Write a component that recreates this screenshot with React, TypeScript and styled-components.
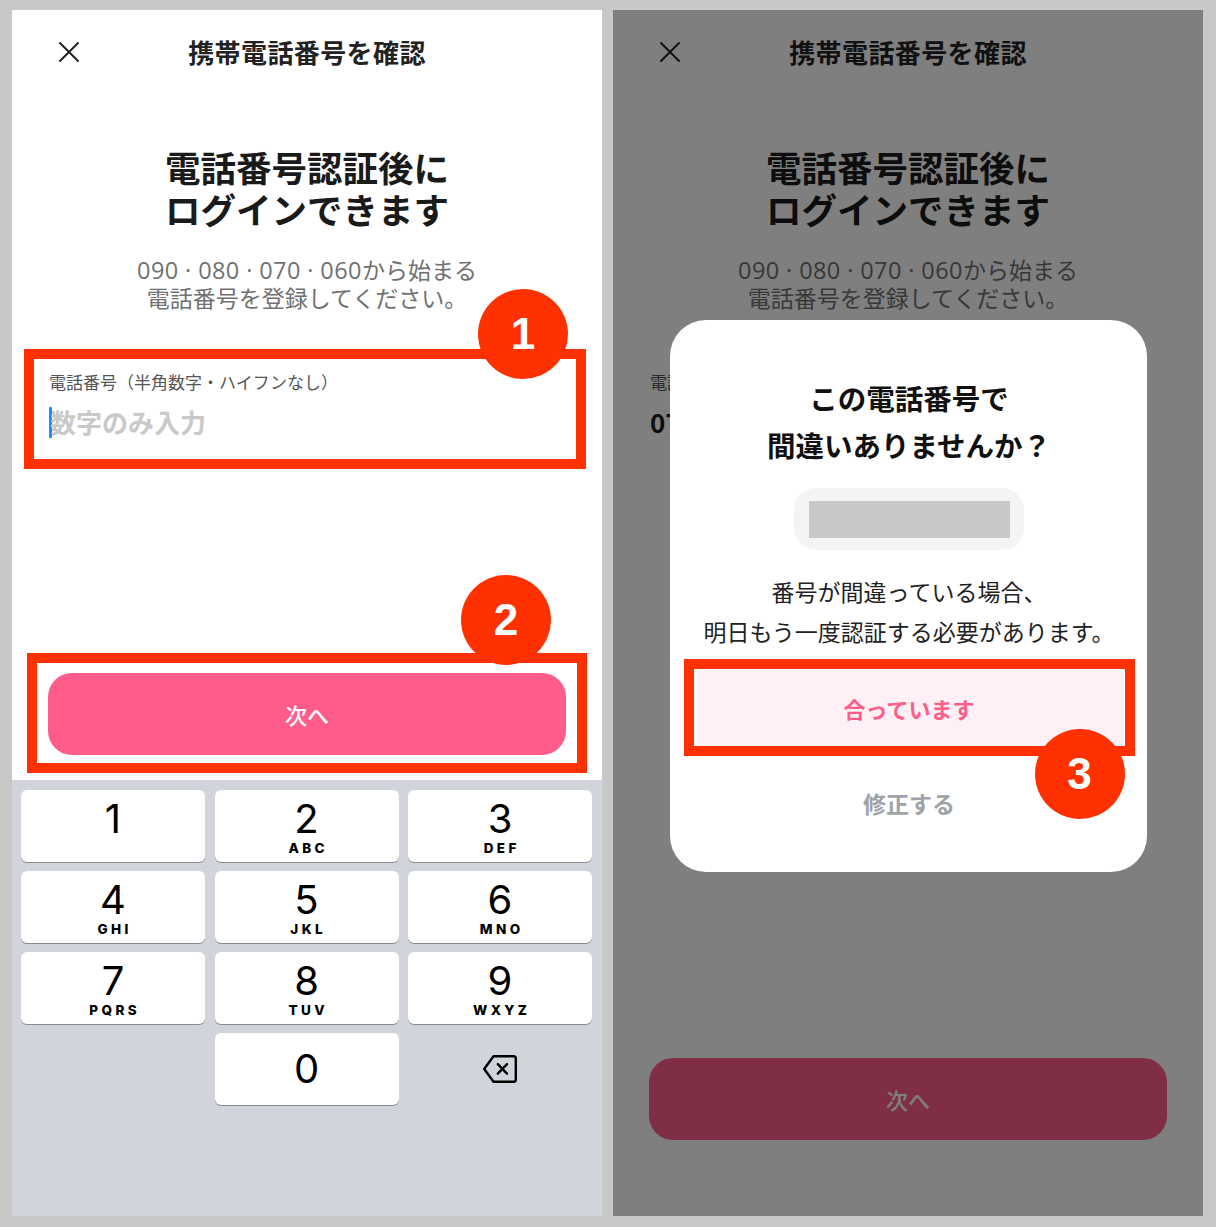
import styled, { createGlobalStyle } from "styled-components";

const JP = `"Noto Sans CJK JP", "Noto Sans", sans-serif`;
const RED = "#ff3100";
const PINK = "#ff5c8a";

const GlobalStyle = createGlobalStyle`
	* { box-sizing: border-box; }
	body {
		margin: 0;
		background: #c8c8c8;
		font-family: ${JP};
	}
`;

const Page = styled.div`
	display: flex;
	gap: 11px;
	padding: 10px 12px 11px;
`;

const Screen = styled.section`
	position: relative;
	width: 590px;
	height: 1206px;
	background: #ffffff;
	display: flex;
	flex-direction: column;
	overflow: hidden;
`;

const Header = styled.header`
	height: 82px;
	margin-bottom: 2px;
	display: grid;
	grid-template-columns: 1fr auto 1fr;
	align-items: center;
`;

const CloseButton = styled.button`
	justify-self: start;
	margin-left: 46px;
	margin-top: 2px;
	padding: 0;
	border: 0;
	background: none;
	display: flex;
`;

const HeaderTitle = styled.h1`
	margin: 0;
	font-size: 26px;
	font-weight: 700;
	color: #222222;
	letter-spacing: 0.4px;
`;

const Heading = styled.h2`
	margin: 52px 0 0;
	text-align: center;
	font-size: 35.5px;
	line-height: 42px;
	font-weight: 700;
	color: #1a1a1a;
`;

const Lead = styled.p`
	margin: 25px 0 0;
	text-align: center;
	font-size: 23px;
	line-height: 28px;
	color: #717171;
`;

const Digits = styled.span`
	font-family: "Open Sans", Roboto, sans-serif;
	font-size: 23.5px;
	line-height: 0;
	letter-spacing: 0.4px;
`;

const Field = styled.div`
	position: relative;
	margin-top: 48px;
	padding: 11px 37px 19px;
	height: 100px;
`;

const FieldLabel = styled.div`
	font-size: 17px;
	line-height: 24px;
	color: #555555;
`;

const FieldValue = styled.div<{ $empty?: boolean }>`
	margin-top: 10px;
	font-size: 26px;
	line-height: 36px;
	font-weight: 700;
	color: ${(p) => (p.$empty ? "#c9c9c9" : "#1a1a1a")};
	white-space: nowrap;
`;

const Caret = styled.span`
	display: inline-block;
	width: 3px;
	height: 31px;
	margin-right: -2px;
	vertical-align: -5px;
	background: #1a8cff;
	border-radius: 1px;
`;

const Spacer = styled.div`
	flex: 1;
`;

const ActionArea = styled.div<{ $bottom: number }>`
	padding: 0 36px ${(p) => p.$bottom}px;
`;

const PrimaryButton = styled.button`
	position: relative;
	width: 100%;
	height: 82px;
	border: 0;
	border-radius: 24px;
	background: ${PINK};
	color: #ffffff;
	font-family: ${JP};
	font-size: 22px;
	font-weight: 500;
`;

const Keyboard = styled.div`
	height: 436px;
	background: #d1d4db;
	padding: 10px 10px 0 9px;
	display: grid;
	grid-template-columns: repeat(3, 184px);
	grid-auto-rows: 72px;
	column-gap: 9.5px;
	row-gap: 9px;
	align-content: start;
`;

const Key = styled.div<{ $centered?: boolean }>`
	background: #ffffff;
	border-radius: 6px;
	box-shadow: 0 1px 0 #898a8e;
	display: flex;
	flex-direction: column;
	align-items: center;
	justify-content: ${(p) => (p.$centered ? "center" : "flex-start")};
	padding-top: ${(p) => (p.$centered ? 0 : 9)}px;
	font-family: Inter, "Liberation Sans", sans-serif;
	color: #000000;
`;

const KeyDigit = styled.span`
	font-size: 40px;
	line-height: 40px;
	font-weight: 400;
`;

const KeyLetters = styled.span`
	margin-top: 2px;
	font-size: 13.5px;
	line-height: 14px;
	font-weight: 800;
	letter-spacing: 3.4px;
	margin-right: -3.4px;
`;

const BlankKey = styled.div``;

const IconKey = styled.div`
	display: flex;
	align-items: center;
	justify-content: center;
`;

const Frame = styled.div<{ $t: number; $r: number; $b: number; $l: number }>`
	position: absolute;
	top: ${(p) => p.$t}px;
	right: ${(p) => p.$r}px;
	bottom: ${(p) => p.$b}px;
	left: ${(p) => p.$l}px;
	border: 10px solid ${RED};
	pointer-events: none;
`;

const Badge = styled.div<{ $top: number; $right: number }>`
	position: absolute;
	top: ${(p) => p.$top}px;
	right: ${(p) => p.$right}px;
	width: 90px;
	height: 90px;
	border-radius: 50%;
	background: ${RED};
	color: #ffffff;
	display: flex;
	align-items: center;
	justify-content: center;
	font-family: "Liberation Sans", Arial, sans-serif;
	font-size: 44px;
	font-weight: 700;
`;

const Overlay = styled.div`
	position: absolute;
	inset: 0;
	background: rgba(0, 0, 0, 0.5);
	display: flex;
	justify-content: center;
	align-items: flex-start;
	padding-top: 310px;
`;

const Dialog = styled.div`
	width: 477px;
	background: #ffffff;
	border-radius: 36px;
	padding: 54px 25px 49px 27px;
	display: flex;
	flex-direction: column;
	align-items: center;
	text-align: center;
`;

const DialogTitle = styled.h3`
	margin: 0;
	font-size: 28.5px;
	line-height: 47px;
	font-weight: 700;
	color: #111111;
`;

const NumberPill = styled.div`
	margin-top: 20px;
	width: 230px;
	height: 62px;
	border-radius: 22px;
	background: #f3f4f6;
	display: flex;
	align-items: center;
	justify-content: center;
`;

const Redacted = styled.div`
	width: 201px;
	height: 37px;
	background: #c8c8c8;
`;

const DialogText = styled.p`
	margin: 21px 0 0;
	font-size: 23px;
	line-height: 40px;
	color: #222222;
	white-space: nowrap;
`;

const ConfirmButton = styled.button`
	position: relative;
	margin-top: 19px;
	width: 425px;
	height: 75px;
	border: 0;
	background: #fff0f5;
	color: ${PINK};
	font-family: ${JP};
	font-size: 22px;
	font-weight: 700;
`;

const TextButton = styled.button`
	margin-top: 38px;
	height: 40px;
	border: 0;
	background: none;
	color: #9ea3a8;
	font-family: ${JP};
	font-size: 23px;
	font-weight: 700;
`;

const CloseIcon = () => (
	<svg width="22" height="22" viewBox="0 0 22 22">
		<path d="M2 2L20 20M20 2L2 20" stroke="#222" strokeWidth="2" strokeLinecap="round" />
	</svg>
);

const BackspaceIcon = () => (
	<svg width="36" height="30" viewBox="0 0 36 30" fill="none">
		<path
			d="M11.5 2.2H31.5a2.3 2.3 0 0 1 2.3 2.3V25.5a2.3 2.3 0 0 1-2.3 2.3H11.5L2.2 15Z"
			stroke="#000"
			strokeWidth="2.4"
			strokeLinejoin="round"
		/>
		<path d="M15.8 10.2L25 19.6M25 10.2L15.8 19.6" stroke="#000" strokeWidth="2.4" strokeLinecap="round" />
	</svg>
);

const keys = [
	{ d: "1", l: "" },
	{ d: "2", l: "ABC" },
	{ d: "3", l: "DEF" },
	{ d: "4", l: "GHI" },
	{ d: "5", l: "JKL" },
	{ d: "6", l: "MNO" },
	{ d: "7", l: "PQRS" },
	{ d: "8", l: "TUV" },
	{ d: "9", l: "WXYZ" },
];

const NumberPad = () => (
	<Keyboard>
		{keys.map((k) => (
			<Key key={k.d}>
				<KeyDigit>{k.d}</KeyDigit>
				{k.l && <KeyLetters>{k.l}</KeyLetters>}
			</Key>
		))}
		<BlankKey />
		<Key $centered>
			<KeyDigit>0</KeyDigit>
		</Key>
		<IconKey>
			<BackspaceIcon />
		</IconKey>
	</Keyboard>
);

const Intro = () => (
	<>
		<Header>
			<CloseButton>
				<CloseIcon />
			</CloseButton>
			<HeaderTitle>携帯電話番号を確認</HeaderTitle>
		</Header>
		<Heading>
			電話番号認証後に
			<br />
			ログインできます
		</Heading>
		<Lead>
			<Digits>090 · 080 · 070 · 060</Digits>から始まる
			<br />
			電話番号を登録してください。
		</Lead>
	</>
);

const EntryScreen = () => (
	<Screen>
		<Intro />
		<Field>
			<FieldLabel>電話番号（半角数字・ハイフンなし）</FieldLabel>
			<FieldValue $empty>
				<Caret />
				数字のみ入力
			</FieldValue>
			<Frame $t={-10} $r={16} $b={-10} $l={12}>
				<Badge $top={-70} $right={8}>1</Badge>
			</Frame>
		</Field>
		<Spacer />
		<ActionArea $bottom={25}>
			<PrimaryButton>
				次へ
				<Frame $t={-20} $r={-21} $b={-18} $l={-21}>
					<Badge $top={-88} $right={26}>2</Badge>
				</Frame>
			</PrimaryButton>
		</ActionArea>
		<NumberPad />
	</Screen>
);

const ConfirmScreen = () => (
	<Screen>
		<Intro />
		<Field>
			<FieldLabel>電話番号（半角数字・ハイフンなし）</FieldLabel>
			<FieldValue>07012345678</FieldValue>
		</Field>
		<Spacer />
		<ActionArea $bottom={76}>
			<PrimaryButton>次へ</PrimaryButton>
		</ActionArea>
		<Overlay>
			<Dialog>
				<DialogTitle>
					この電話番号で
					<br />
					間違いありませんか？
				</DialogTitle>
				<NumberPill>
					<Redacted />
				</NumberPill>
				<DialogText>
					番号が間違っている場合、
					<br />
					明日もう一度認証する必要があります。
				</DialogText>
				<ConfirmButton>
					合っています
					<Frame $t={-11} $r={-13} $b={-11} $l={-13}>
						<Badge $top={60} $right={0}>3</Badge>
					</Frame>
				</ConfirmButton>
				<TextButton>修正する</TextButton>
			</Dialog>
		</Overlay>
	</Screen>
);

export default function App() {
	return (
		<>
			<GlobalStyle />
			<Page>
				<EntryScreen />
				<ConfirmScreen />
			</Page>
		</>
	);
}
